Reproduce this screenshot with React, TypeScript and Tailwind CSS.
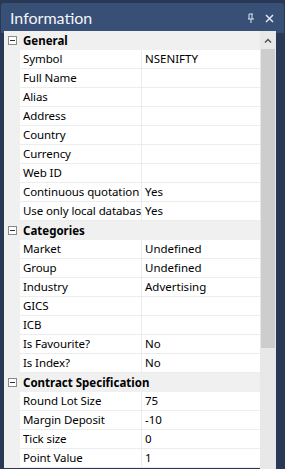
import React from "react";

type Row = { label: string; value?: string; header?: boolean };

const rows: Row[] = [
  { label: "General", header: true },
  { label: "Symbol", value: "NSENIFTY" },
  { label: "Full Name" },
  { label: "Alias" },
  { label: "Address" },
  { label: "Country" },
  { label: "Currency" },
  { label: "Web ID" },
  { label: "Continuous quotation", value: "Yes" },
  { label: "Use only local databas", value: "Yes" },
  { label: "Categories", header: true },
  { label: "Market", value: "Undefined" },
  { label: "Group", value: "Undefined" },
  { label: "Industry", value: "Advertising" },
  { label: "GICS" },
  { label: "ICB" },
  { label: "Is Favourite?", value: "No" },
  { label: "Is Index?", value: "No" },
  { label: "Contract Specification", header: true },
  { label: "Round Lot Size", value: "75" },
  { label: "Margin Deposit", value: "-10" },
  { label: "Tick size", value: "0" },
  { label: "Point Value", value: "1" },
];

function Collapse() {
  return (
    <div className="w-[9px] h-[9px] border border-[#8a8a8a] bg-white flex items-center justify-center">
      <div className="w-[5px] h-px bg-[#333]" />
    </div>
  );
}

function GridRow({ row }: { row: Row }) {
  if (row.header) {
    return (
      <div className="flex h-[19px] bg-[#f0f0f0]">
        <div className="w-[16px] flex items-center justify-center pl-[1px]">
          <Collapse />
        </div>
        <div className="flex-1 pl-[3px] flex items-center font-bold text-black whitespace-nowrap overflow-hidden">
          {row.label}
        </div>
      </div>
    );
  }
  return (
    <div className="flex h-[19px]">
      <div className="w-[16px] bg-[#f0f0f0]" />
      <div className="flex-1 flex bg-white border-b border-[#ececec]">
        <div className="w-[122px] pl-[3px] flex items-center whitespace-nowrap overflow-hidden border-r border-[#ececec]">
          <span className="block w-[118px] overflow-hidden tracking-[-0.1px]">{row.label}</span>
        </div>
        <div className="flex-1 pl-[3px] flex items-center whitespace-nowrap overflow-hidden">
          {row.value ?? ""}
        </div>
      </div>
    </div>
  );
}

export default function App() {
  return (
    <div
      className="w-[285px] h-[469px] bg-[#293955] flex flex-col overflow-hidden text-[11.5px] text-black"
      style={{ fontFamily: '"Noto Sans", "Open Sans", sans-serif' }}
    >
      <div className="h-[30px] mt-[3px] mx-[1px] rounded-t-[3px] bg-[#384f76] flex items-center pl-[9px] pr-[10px]">
        <span
          className="text-[16px] text-[#f2f5fa] leading-none flex-1 -mt-[1px]"
          style={{ fontFamily: 'Lato, "Noto Sans", sans-serif' }}
        >
          Information
        </span>
        <svg width="8" height="11" viewBox="0 0 8 11" className="mr-[10px]">
          <path d="M2 1h4M2 1v5M5 1v5M1 6h6M4 6v4" stroke="#dfe6f2" strokeWidth="1" fill="none" />
        </svg>
        <svg width="9" height="9" viewBox="0 0 9 9">
          <path d="M1 1l7 7M8 1l-7 7" stroke="#dfe6f2" strokeWidth="1.5" />
        </svg>
      </div>
      <div className="flex flex-1 ml-[4px] mr-[9px] -mt-[2px] overflow-hidden">
        <div className="flex-1 flex flex-col">
          {rows.map((r) => (
            <GridRow key={r.label} row={r} />
          ))}
        </div>
        <div className="w-[16px] bg-[#e8e8e8] flex flex-col">
          <div className="h-[18px] flex items-center justify-center">
            <svg width="8" height="5" viewBox="0 0 8 5">
              <path d="M1 4.5L4 1.5L7 4.5" stroke="#555" strokeWidth="1.5" fill="none" />
            </svg>
          </div>
          <div className="mx-[1px] h-[299px] bg-[#cdcdcd]" />
        </div>
      </div>
    </div>
  );
}
